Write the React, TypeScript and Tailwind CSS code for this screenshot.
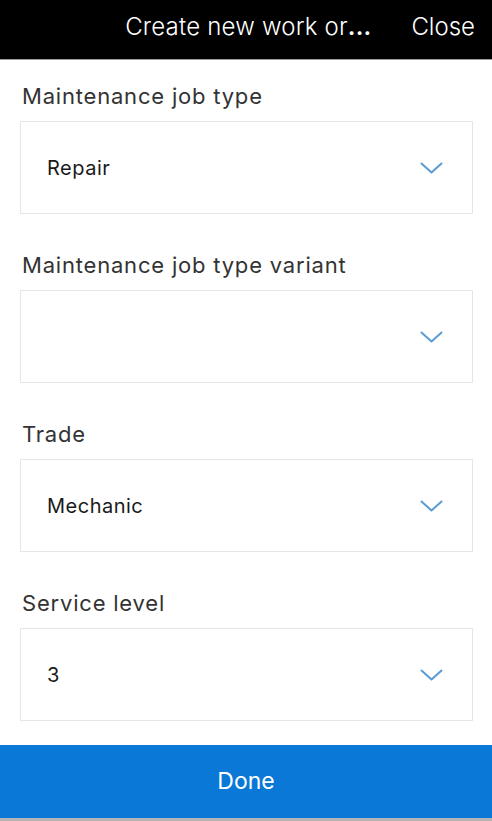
import React from "react";

const fields = [
  { label: "Maintenance job type", value: "Repair" },
  { label: "Maintenance job type variant", value: "" },
  { label: "Trade", value: "Mechanic" },
  { label: "Service level", value: "3" },
];

function Chevron() {
  return (
    <svg width="23" height="12" viewBox="0 0 23 12" fill="none">
      <path d="M1.5 1.5l10 9 10-9" stroke="#5b9bd5" strokeWidth="2" strokeLinecap="round" strokeLinejoin="round" />
    </svg>
  );
}

export default function App() {
  return (
    <div className="w-[492px] h-[821px] flex flex-col bg-white font-['Inter',sans-serif]">
      {/* Header */}
      <header className="h-[60px] shrink-0 bg-black border-b border-[#9a9a9a] flex items-center justify-end pr-[17px] pb-[6px]">
        <span className="text-white text-[24px] font-light tracking-[0.2px] mr-[40px]">
          Create new work or<span className="font-semibold">...</span>
        </span>
        <span className="text-white text-[24px] font-light">Close</span>
      </header>

      {/* Form */}
      <main className="flex-1 pt-[22px] pl-[20px] pr-[19px] flex flex-col">
        {fields.map((f) => (
          <div key={f.label} className="mb-[37px] last:mb-0">
            <div className="text-[22px] leading-[28px] tracking-[0.8px] text-[#333] pl-[2px] mb-[11px]">{f.label}</div>
            <div className="h-[93px] border border-[#e6e6e6] flex items-center justify-between pl-[26px] pr-[29px]">
              <span className="text-[20px] tracking-[0.5px] text-[#1a1a1a]">{f.value}</span>
              <Chevron />
            </div>
          </div>
        ))}
      </main>

      {/* Footer */}
      <button className="h-[76px] shrink-0 bg-[#0a78d7] border-b-[3px] border-[#b5b5b5] text-white text-[23px] flex items-center justify-center">
        Done
      </button>
    </div>
  );
}
